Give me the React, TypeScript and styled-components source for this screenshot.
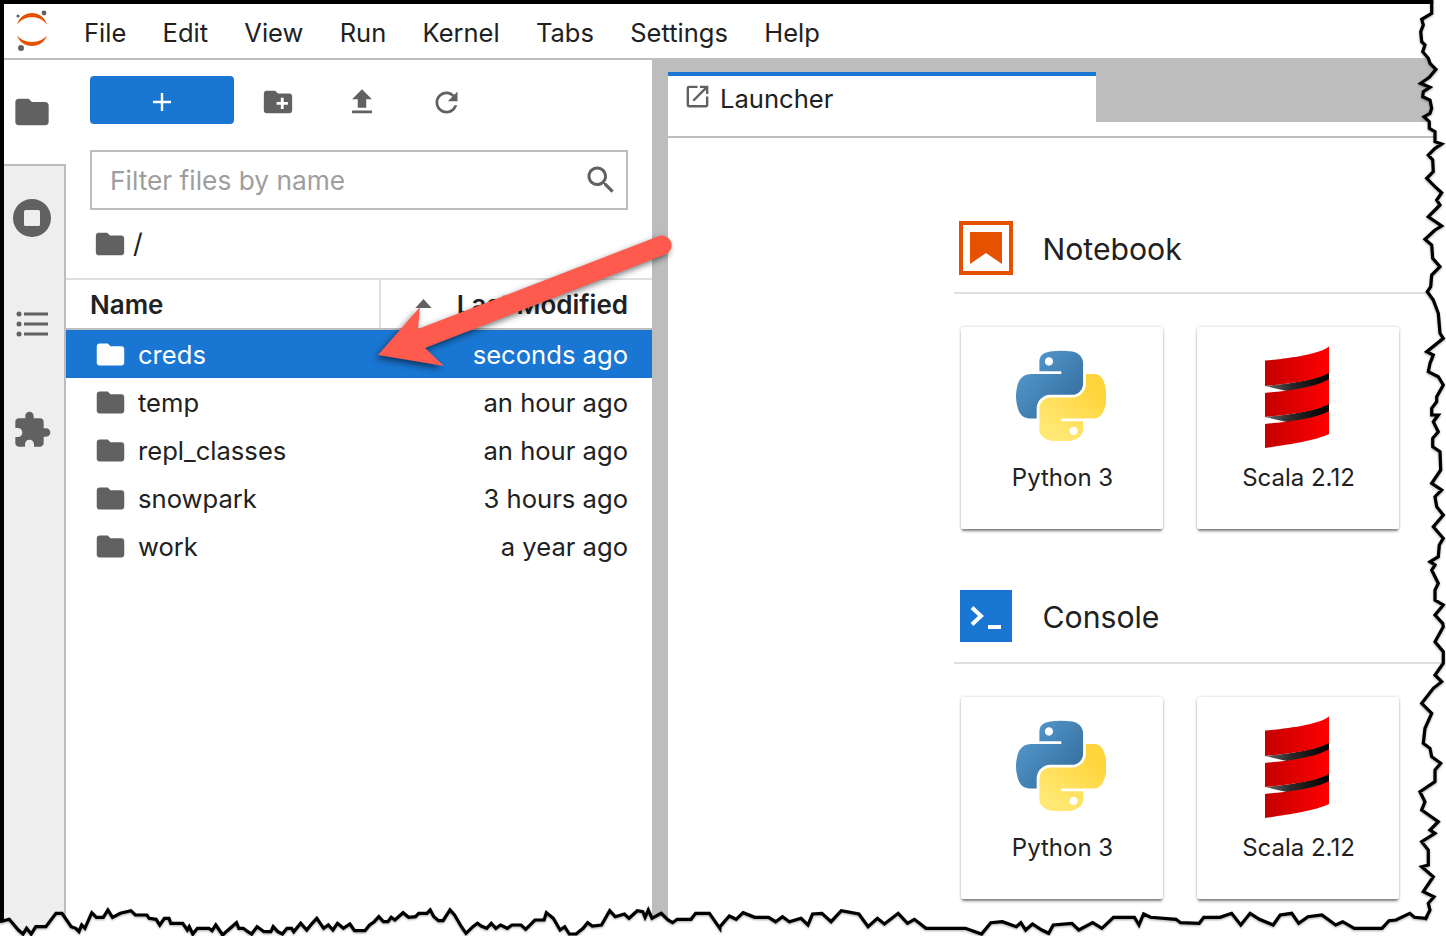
import React from 'react';
import styled, { createGlobalStyle } from 'styled-components';

const Global = createGlobalStyle`
  html, body { margin: 0; padding: 0; background: #fff; }
  * { box-sizing: border-box; }
`;

const GRAY = '#bdbdbd';
const LIGHT = '#e0e0e0';
const ICON = '#616161';
const BLUE = '#1976d2';
const INK = '#212121';

const Page = styled.div`
  position: relative;
  width: 1446px;
  height: 936px;
  overflow: hidden;
  background: #fff;
  font-family: Inter, "Liberation Sans", sans-serif;
  color: ${INK};
`;
const Win = styled.div`
  width: 100%;
  height: 100%;
  display: flex;
  flex-direction: column;
  border-top: 4px solid #000;
  border-left: 4px solid #000;
`;
const MenuBar = styled.header`
  height: 56px;
  flex: none;
  display: flex;
  align-items: flex-start;
  border-bottom: 2px solid ${GRAY};
  padding-left: 4px;
`;
const LogoSlot = styled.div`
  width: 76px;
  height: 54px;
`;
const MenuList = styled.nav`
  display: flex;
  gap: 36.3px;
  font-size: 25.5px;
  line-height: 32px;
  padding-top: 13px;
`;
const Body = styled.div`
  flex: 1;
  min-height: 0;
  display: flex;
`;
const Sidebar = styled.aside`
  width: 62px;
  flex: none;
  display: flex;
  flex-direction: column;
`;
const ActiveTab = styled.div`
  height: 104px;
  flex: none;
  display: flex;
  align-items: center;
  justify-content: center;
  padding-right: 6px;
`;
const Rail = styled.div`
  flex: 1;
  background: #eeeeee;
  border-top: 2px solid ${GRAY};
  border-right: 2px solid ${GRAY};
  display: flex;
  flex-direction: column;
  gap: 2px;
`;
const RailTab = styled.div`
  height: 104px;
  display: flex;
  align-items: center;
  justify-content: center;
  padding-right: 4px;
`;
const FilePanel = styled.section`
  width: 586px;
  flex: none;
  display: flex;
  flex-direction: column;
`;
const Toolbar = styled.div`
  display: flex;
  align-items: center;
  padding: 16px 0 0 24px;
`;
const NewButton = styled.div`
  width: 144px;
  height: 48px;
  border-radius: 4px;
  background: ${BLUE};
  display: flex;
  align-items: center;
  justify-content: center;
  margin-right: 2px;
  padding-top: 4px;
`;
const ToolButton = styled.div`
  width: 84px;
  height: 48px;
  display: flex;
  align-items: center;
  justify-content: center;
  padding-top: 4px;
`;
const FilterBox = styled.div`
  margin: 26px 24px 0;
  height: 60px;
  border: 2px solid ${GRAY};
  display: flex;
  align-items: center;
  padding: 0 7px 0 18px;
`;
const FilterInput = styled.input`
  flex: 1;
  min-width: 0;
  border: 0;
  outline: 0;
  padding: 2px 0 0;
  background: transparent;
  font: 400 26.3px/32px Inter, "Liberation Sans", sans-serif;
  &::placeholder { color: #9e9e9e; opacity: 1; }
`;
const Crumbs = styled.div`
  height: 68px;
  flex: none;
  display: flex;
  align-items: center;
  padding-left: 27px;
  font-size: 27px;
`;
const Slash = styled.span`
  margin-left: 6px;
  line-height: 32px;
`;
const ListHead = styled.div`
  height: 52px;
  flex: none;
  display: flex;
  border-top: 2px solid ${LIGHT};
  border-bottom: 2px solid ${GRAY};
  font-weight: 600;
  font-size: 26px;
`;
const NameHead = styled.div`
  width: 315px;
  flex: none;
  padding-left: 24px;
  border-right: 2px solid ${LIGHT};
  display: flex;
  align-items: center;
`;
const ModHead = styled.div`
  flex: 1;
  display: flex;
  align-items: center;
  justify-content: space-between;
  padding: 0 24px 0 34px;
`;
const Caret = styled.svg`
  width: 17px;
  height: 9px;
  margin-top: -2px;
`;
const Row = styled.div<{ $sel?: boolean }>`
  height: 48px;
  display: flex;
  align-items: center;
  padding: 0 24px 0 28px;
  font-size: 25.6px;
  background: ${p => (p.$sel ? BLUE : 'transparent')};
  color: ${p => (p.$sel ? '#fff' : INK)};
`;
const RowName = styled.span`
  flex: 1;
  margin-left: 11px;
`;
const RowTime = styled.span``;
const Splitter = styled.div`
  width: 16px;
  flex: none;
  background: ${GRAY};
`;
const Main = styled.main`
  flex: 1;
  min-width: 0;
  display: flex;
  flex-direction: column;
`;
const TabBar = styled.div`
  height: 78px;
  flex: none;
  border-bottom: 2px solid ${GRAY};
`;
const TabStrip = styled.div`
  height: 64px;
  margin-top: -2px;
  background: ${GRAY};
  padding-top: 14px;
`;
const Tab = styled.div`
  width: 428px;
  height: 64px;
  background: #fff;
  border-top: 4px solid ${BLUE};
  display: flex;
  align-items: center;
  padding: 0 0 15px 15px;
  font-size: 25.6px;
`;
const TabIcon = styled.div`
  display: flex;
  margin-top: -4px;
`;
const TabTitle = styled.span`
  margin-left: 8px;
`;
const Launcher = styled.div`
  flex: 1;
  padding: 83px 0 0 286px;
`;
const Section = styled.section`
  margin-bottom: 61px;
`;
const Head = styled.div<{ $h: number }>`
  height: ${p => p.$h}px;
  border-bottom: 2px solid ${LIGHT};
  display: flex;
  align-items: flex-start;
  padding-left: 5px;
`;
const HeadIcon = styled.div`
  width: 54px;
  height: 54px;
  margin-right: 29.5px;
`;
const HeadTitle = styled.h2<{ $top: number }>`
  margin: 0;
  padding-top: ${p => p.$top}px;
  font-weight: 400;
  font-size: 30.2px;
  line-height: 55px;
`;
const Cards = styled.div`
  display: flex;
  gap: 34px;
  padding: 33px 0 0 7px;
`;
const Card = styled.div`
  width: 202px;
  height: 202px;
  background: #fff;
  border-radius: 2px;
  box-shadow: 0 0 3px rgba(0, 0, 0, 0.2), 0 3px 3px -1px rgba(0, 0, 0, 0.5);
  display: flex;
  flex-direction: column;
  align-items: center;
`;
const CardArt = styled.div`
  height: 137px;
  display: flex;
  align-items: center;
  justify-content: center;
`;
const CardLabel = styled.div`
  font-size: 24px;
  line-height: 28px;
  padding-left: 1px;
`;
const PythonSvg = styled.svg`
  margin-right: 2px;
`;
const ScalaSvg = styled.svg`
  margin: 3px 2px 0 0;
`;
const Overlay = styled.svg`
  position: absolute;
  left: 0;
  top: 0;
  width: 1446px;
  height: 936px;
  pointer-events: none;
`;

const P = {
  folder: 'M10 4H4c-1.1 0-1.99.9-1.99 2L2 18c0 1.1.9 2 2 2h16c1.1 0 2-.9 2-2V8c0-1.1-.9-2-2-2h-8l-2-2z',
  newFolder: 'M20 6h-8l-2-2H4c-1.1 0-1.99.9-1.99 2L2 18c0 1.1.9 2 2 2h16c1.1 0 2-.9 2-2V8c0-1.1-.9-2-2-2zm-1 8h-3v3h-2v-3h-3v-2h3V9h2v3h3v2z',
  upload: 'M9 16h6v-6h4l-7-7-7 7h4zm-4 2h14v2H5z',
  refresh: 'M17.65 6.35C16.2 4.9 14.21 4 12 4c-4.42 0-7.99 3.58-7.99 8s3.57 8 7.99 8c3.73 0 6.84-2.55 7.73-6h-2.08c-.82 2.33-3.04 4-5.65 4-3.31 0-6-2.69-6-6s2.69-6 6-6c1.66 0 3.14.69 4.22 1.78L13 11h7V4l-2.35 2.35z',
  search: 'M15.5 14h-.79l-.28-.27C15.41 12.59 16 11.11 16 9.5 16 5.91 13.09 3 9.5 3S3 5.91 3 9.5 5.91 16 9.5 16c1.61 0 3.09-.59 4.23-1.57l.27.28v.79l5 4.99L20.49 19l-4.99-5zm-6 0C7.01 14 5 11.99 5 9.5S7.01 5 9.5 5 14 7.01 14 9.5 11.99 14 9.5 14z',
  puzzle: 'M20.5 11H19V7c0-1.1-.9-2-2-2h-4V3.5C13 2.12 11.88 1 10.5 1S8 2.12 8 3.5V5H4c-1.1 0-1.99.9-1.99 2v3.8H3.5c1.49 0 2.7 1.21 2.7 2.7s-1.21 2.7-2.7 2.7H2V20c0 1.1.9 2 2 2h3.8v-1.5c0-1.49 1.21-2.7 2.7-2.7 1.49 0 2.7 1.21 2.7 2.7V22H17c1.1 0 2-.9 2-2v-4h1.5c1.38 0 2.5-1.12 2.5-2.5S21.88 11 20.5 11z',
  launch: 'M19 19H5V5h7V3H5a2 2 0 0 0-2 2v14a2 2 0 0 0 2 2h14c1.1 0 2-.9 2-2v-7h-2v7zM14 3v2h3.59l-9.83 9.83 1.41 1.41L19 6.41V10h2V3h-7z',
};

const Glyph = ({ d, size, color = ICON }: { d: string; size: number; color?: string }) => (
  <svg width={size} height={size} viewBox="0 0 24 24" fill={color}><path d={d} /></svg>
);

const JupyterLogo = () => (
  <svg width="44" height="50" viewBox="0 0 44 50">
    <circle cx="36" cy="9" r="2.4" fill="#616161" />
    <circle cx="10" cy="12" r="1.6" fill="#616161" />
    <circle cx="13" cy="44" r="3" fill="#616161" />
    <path d="M9 21C13 5 35 5 39 21 33 10.5 15 10.5 9 21Z" fill="#e65100" />
    <path d="M9 31C15 40.3 33 40.3 39 31 35 45.7 13 45.7 9 31Z" fill="#e65100" />
  </svg>
);

const StopIcon = () => (
  <svg width="38" height="38" viewBox="0 0 38 38">
    <circle cx="19" cy="19" r="19" fill={ICON} />
    <rect x="11" y="11" width="16" height="16" rx="1.5" fill="#eeeeee" />
  </svg>
);

const ListIcon = () => (
  <svg width="34" height="26" viewBox="0 0 34 26" fill={ICON}>
    <circle cx="4" cy="3" r="2.5" /><circle cx="4" cy="13" r="2.5" /><circle cx="4" cy="23" r="2.5" />
    <rect x="9" y="1.5" width="24" height="3" /><rect x="9" y="11.5" width="24" height="3" /><rect x="9" y="21.5" width="24" height="3" />
  </svg>
);

const NotebookIcon = () => (
  <svg width="54" height="54" viewBox="0 0 54 54">
    <rect x="2" y="2" width="50" height="50" fill="#fff" stroke="#e65100" strokeWidth="4" />
    <path d="M11 11H43V43L27 32 11 43Z" fill="#e65100" />
  </svg>
);

const ConsoleIcon = () => (
  <svg width="54" height="54" viewBox="0 0 54 54">
    <rect x="1" y="0" width="52" height="52" fill={BLUE} />
    <path d="M13 17.5L22 26 13 34.5" fill="none" stroke="#fff" strokeWidth="4" />
    <rect x="29" y="35" width="13" height="4" fill="#fff" />
  </svg>
);

const PythonLogo = ({ id }: { id: string }) => (
  <PythonSvg width="90" height="91" viewBox="0 0 110.4 110">
    <defs>
      <linearGradient id={`${id}b`} x1="0" y1="0" x2="1" y2="0.92">
        <stop offset="0" stopColor="#5a9fd4" /><stop offset="1" stopColor="#306998" />
      </linearGradient>
      <linearGradient id={`${id}y`} x1="0.2" y1="0.85" x2="0.75" y2="0.15">
        <stop offset="0" stopColor="#ffe873" /><stop offset="1" stopColor="#ffd43b" />
      </linearGradient>
    </defs>
    <path fill={`url(#${id}b)`} d="M54.919 0C50.335.022 45.958.413 42.106 1.095 30.76 3.099 28.7 7.295 28.7 15.032v10.219h26.813v3.406H18.638c-7.793 0-14.616 4.684-16.75 13.594-2.462 10.213-2.571 16.586 0 27.25 1.906 7.938 6.458 13.594 14.25 13.594h9.219v-12.25c0-8.85 7.657-16.656 16.75-16.656h26.781c7.455 0 13.406-6.138 13.406-13.625V15.032c0-7.266-6.13-12.725-13.406-13.938C64.282.328 59.502-.02 54.919 0zm-14.5 8.22c2.77 0 5.031 2.299 5.031 5.125 0 2.816-2.262 5.094-5.031 5.094-2.78 0-5.031-2.278-5.031-5.094 0-2.826 2.251-5.125 5.031-5.125z" />
    <path fill={`url(#${id}y)`} d="M85.638 28.657v11.906c0 9.231-7.826 17-16.75 17H42.106c-7.336 0-13.406 6.278-13.406 13.625v25.531c0 7.266 6.319 11.54 13.406 13.625 8.487 2.496 16.626 2.947 26.781 0 6.75-1.954 13.406-5.888 13.406-13.625V86.501H55.513v-3.406h40.187c7.793 0 10.696-5.421 13.406-13.594 2.8-8.414 2.74-16.505 0-27.25-1.926-7.736-5.604-13.594-13.406-13.594zM70.575 93.313c2.78 0 5.031 2.278 5.031 5.094 0 2.826-2.251 5.125-5.031 5.125-2.77 0-5.031-2.299-5.031-5.125 0-2.816 2.262-5.094 5.031-5.094z" />
  </PythonSvg>
);

const ScalaLogo = ({ id }: { id: string }) => (
  <ScalaSvg width="65" height="103" viewBox="0 0 65 103">
    <defs>
      <linearGradient id={`${id}r`} x1="0" y1="0" x2="1" y2="0">
        <stop offset="0" stopColor="#c40000" /><stop offset="1" stopColor="#ff0000" />
      </linearGradient>
      <linearGradient id={`${id}k`} x1="0" y1="0" x2="1" y2="0">
        <stop offset="0" stopColor="#6a6a6a" /><stop offset="0.4" stopColor="#2a2a2a" /><stop offset="1" stopColor="#000" />
      </linearGradient>
    </defs>
    <path fill={`url(#${id}k)`} d="M0 40C20 38 50 35 64 26V40L26 46Z" />
    <path fill={`url(#${id}k)`} d="M0 71C20 69 50 66 64 57V71L26 77Z" />
    <path fill={`url(#${id}r)`} d="M0 14.5C25 12.5 55 8 64 .5V27C50 35 20 38 0 40Z" />
    <path fill={`url(#${id}r)`} d="M0 47C20 45 50 42 64 33V58C50 66 20 69 0 71Z" />
    <path fill={`url(#${id}r)`} d="M0 78C20 76 50 73 64 65V88C50 95 20 99 0 102Z" />
  </ScalaSvg>
);

/* Torn-paper edge, read off the reference. */
const rightA = [[155,10],[155,40],[125,58],[130,75],[122,95],[125,125],[135,135],[128,155],[145,175],[150,190],[168,208],[148,232],[122,250],[150,262],[130,275],[128,290],[150,300],[155,325],[150,340],[132,350],[148,365],[148,385],[165,395],[165,425],[185,432],[165,445],[145,465],[158,480],[160,515],[140,535],[165,560],[185,578],[170,600],[180,615],[165,630],[145,650],[185,678],[165,690],[135,718],[155,735],[158,775],[180,800],[155,825],[152,860],[142,875],[160,900]]
  .map(([x, y]) => [1380 + x / 3, y / 3]);
const rightB = [[175,40],[180,100],[190,115],[140,155],[160,165],[150,190],[145,215],[175,230],[190,255],[170,290],[170,305],[155,325],[155,345],[175,345],[160,365],[175,395],[158,415],[158,440],[180,455],[182,510],[155,550],[185,570],[165,590],[170,620],[190,645],[160,680],[190,715],[178,735],[175,770],[150,785],[165,795],[155,810],[175,850],[165,870],[165,900],[190,915],[165,945]]
  .map(([x, y]) => [1380 + x / 3, 300 + y / 3]);
const rightC = [[188,10],[190,20],[165,65],[190,95],[190,130],[165,165],[185,185],[160,205],[125,250],[155,280],[135,325],[130,370],[150,385],[155,410],[182,430],[165,450],[165,485],[120,515],[135,545],[125,570],[175,605],[150,630],[165,640],[125,665],[145,690],[145,735],[125,740],[160,770],[130,815],[162,830],[145,850],[150,870],[135,900]]
  .map(([x, y]) => [1380 + x / 3, 620 + y / 3]);
const bottomB = [[1525,115],[1500,112],[1490,100],[1460,120],[1445,122],[1430,145],[1370,145],[1345,125],[1330,135],[1300,105],[1270,110],[1250,130],[1235,100],[1210,105],[1195,135],[1165,118],[1145,100],[1125,135],[1105,100],[1080,112],[1045,112],[1035,130],[995,128],[985,118],[930,112],[915,102],[905,135],[895,112],[850,112],[825,145],[805,128],[775,150],[760,130],[720,135],[710,160],[695,150],[675,132],[660,150],[650,128],[640,140],[610,125],[585,128],[565,162],[530,145],[445,145],[420,118],[405,130],[385,100],[355,132],[340,115],[320,140],[300,102],[262,92],[240,125],[220,100],[200,102],[190,135],[175,115],[150,125],[135,110],[120,125],[105,112],[75,112],[50,98],[35,118],[20,108],[0,140]]
  .map(([x, y]) => [720 + x / 2.16, 880 + y / 3]);
const bottomA = [[1568,205],[1545,160],[1515,160],[1505,178],[1475,178],[1465,188],[1455,180],[1440,160],[1420,175],[1412,150],[1405,172],[1400,155],[1388,152],[1370,175],[1360,162],[1340,170],[1328,152],[1310,195],[1290,198],[1280,188],[1270,205],[1255,222],[1240,222],[1230,200],[1220,210],[1205,175],[1190,158],[1185,180],[1165,180],[1145,208],[1135,195],[1115,195],[1105,205],[1090,195],[1080,205],[1070,190],[1060,205],[1048,198],[1040,190],[1030,200],[1015,220],[1005,200],[990,165],[980,150],[965,182],[955,182],[945,170],[937,150],[930,160],[912,160],[905,170],[890,172],[878,158],[860,180],[852,172],[845,185],[835,185],[825,170],[815,185],[805,195],[795,212],[772,212],[762,192],[748,205],[735,190],[725,210],[715,195],[705,205],[690,175],[680,190],[668,210],[655,190],[640,215],[635,205],[625,205],[615,222],[605,215],[595,200],[590,215],[575,215],[560,200],[548,222],[540,215],[530,205],[520,205],[515,188],[495,212],[485,225],[470,195],[462,212],[455,205],[430,205],[420,222],[412,200],[408,210],[398,190],[372,190],[368,175],[358,175],[348,195],[340,178],[325,175],[320,165],[295,165],[285,152],[262,160],[245,172],[235,150],[225,172],[210,172],[200,158],[185,205],[178,195],[172,215],[165,205],[155,200],[135,160],[122,160],[100,200],[78,200],[68,222],[58,205],[50,222],[40,210],[20,178],[0,185]]
  .map(([x, y]) => [x / 2.178, 860 + y / 3]);

const edge = [[1432, 0], ...rightA, ...rightB, ...rightC, ...bottomB, ...bottomA]
  .map(([x, y]) => `${x.toFixed(1)} ${y.toFixed(1)}`)
  .join(' L');

const TornEdge = () => (
  <Overlay viewBox="0 0 1446 936">
    <path d={`M${edge} L-2 940 L1450 940 L1450 -2 L1432 -2 Z`} fill="#fff" />
    <path
      d={`M${edge}`}
      fill="none"
      stroke="#000"
      strokeWidth="3.2"
      strokeLinejoin="miter"
      style={{ filter: 'drop-shadow(0 1px 1px rgba(0,0,0,.35))' }}
    />
  </Overlay>
);

const Arrow = () => (
  <Overlay viewBox="0 0 1446 936">
    <path
      d="M378 355L420 307 418 329 658 236.5A9.5 9.5 0 0 1 666 254L425 348 444 366Z"
      fill="#ff5a4e"
      style={{ filter: 'drop-shadow(-2px 3px 3px rgba(0,0,0,.55))' }}
    />
  </Overlay>
);

const files = [
  { name: 'creds', time: 'seconds ago', sel: true },
  { name: 'temp', time: 'an hour ago' },
  { name: 'repl_classes', time: 'an hour ago' },
  { name: 'snowpark', time: '3 hours ago' },
  { name: 'work', time: 'a year ago' },
];
const menus = ['File', 'Edit', 'View', 'Run', 'Kernel', 'Tabs', 'Settings', 'Help'];

const KernelCards = ({ prefix }: { prefix: string }) => (
  <Cards>
    <Card>
      <CardArt><PythonLogo id={`${prefix}p`} /></CardArt>
      <CardLabel>Python 3</CardLabel>
    </Card>
    <Card>
      <CardArt><ScalaLogo id={`${prefix}s`} /></CardArt>
      <CardLabel>Scala 2.12</CardLabel>
    </Card>
  </Cards>
);

export default function App() {
  return (
    <Page>
      <Global />
      <Win>
        <MenuBar>
          <LogoSlot><JupyterLogo /></LogoSlot>
          <MenuList>{menus.map(m => <span key={m}>{m}</span>)}</MenuList>
        </MenuBar>
        <Body>
          <Sidebar>
            <ActiveTab><Glyph d={P.folder} size={40} /></ActiveTab>
            <Rail>
              <RailTab><StopIcon /></RailTab>
              <RailTab><ListIcon /></RailTab>
              <RailTab><Glyph d={P.puzzle} size={40} /></RailTab>
            </Rail>
          </Sidebar>
          <FilePanel>
            <Toolbar>
              <NewButton>
                <svg width="20" height="20" viewBox="0 0 20 20"><path d="M10 1V19M1 10H19" stroke="#fff" strokeWidth="2.4" /></svg>
              </NewButton>
              <ToolButton><Glyph d={P.newFolder} size={34} /></ToolButton>
              <ToolButton><Glyph d={P.upload} size={34} /></ToolButton>
              <ToolButton><Glyph d={P.refresh} size={33} /></ToolButton>
            </Toolbar>
            <FilterBox>
              <FilterInput placeholder="Filter files by name" readOnly />
              <Glyph d={P.search} size={36} />
            </FilterBox>
            <Crumbs>
              <Glyph d={P.folder} size={34} />
              <Slash>/</Slash>
            </Crumbs>
            <ListHead>
              <NameHead>Name</NameHead>
              <ModHead>
                <Caret viewBox="0 0 18 10"><path d="M9 0L18 10H0Z" fill={ICON} /></Caret>
                <span>Last Modified</span>
              </ModHead>
            </ListHead>
            {files.map(f => (
              <Row key={f.name} $sel={f.sel}>
                <Glyph d={P.folder} size={33} color={f.sel ? '#fff' : ICON} />
                <RowName>{f.name}</RowName>
                <RowTime>{f.time}</RowTime>
              </Row>
            ))}
          </FilePanel>
          <Splitter />
          <Main>
            <TabBar>
              <TabStrip>
                <Tab>
                  <TabIcon><Glyph d={P.launch} size={29} /></TabIcon>
                  <TabTitle>Launcher</TabTitle>
                </Tab>
              </TabStrip>
            </TabBar>
            <Launcher>
              <Section>
                <Head $h={73}>
                  <HeadIcon><NotebookIcon /></HeadIcon>
                  <HeadTitle $top={1}>Notebook</HeadTitle>
                </Head>
                <KernelCards prefix="nb" />
              </Section>
              <Section>
                <Head $h={74}>
                  <HeadIcon><ConsoleIcon /></HeadIcon>
                  <HeadTitle $top={0}>Console</HeadTitle>
                </Head>
                <KernelCards prefix="co" />
              </Section>
            </Launcher>
          </Main>
        </Body>
      </Win>
      <Arrow />
      <TornEdge />
    </Page>
  );
}
